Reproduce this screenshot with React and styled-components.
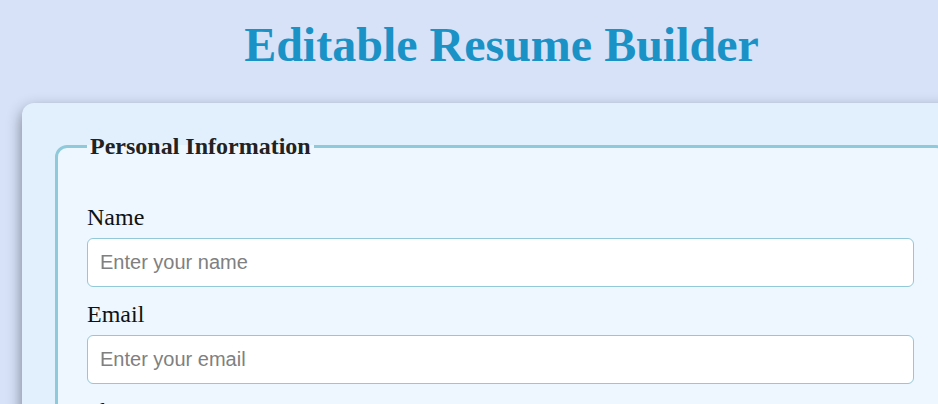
import React from "react";
import styled, { createGlobalStyle } from "styled-components";

const GlobalStyle = createGlobalStyle`
  *, *::before, *::after { box-sizing: border-box; }
  body {
    margin: 0;
    overflow: hidden;
    background: #d7e2f9;
    font-family: "Liberation Serif", "Times New Roman", serif;
    font-size: 24px;
    line-height: 27px;
    color: #111;
  }
`;

const Viewport = styled.div`
  height: 100vh;
  overflow: hidden;
`;

const Page = styled.main`
  width: calc(100% + 65px);
  padding: 17px 22px;
`;

const Title = styled.h1`
  margin: 0 0 30px;
  font-size: 48px;
  line-height: 56px;
  font-weight: 700;
  text-align: center;
  color: #1b92c6;
`;

const Card = styled.form`
  padding: 30px 33px;
  border-radius: 12px;
  background: #e2f0fe;
  box-shadow: 0 6px 15px rgba(0, 0, 0, 0.45);
`;

const Section = styled.fieldset`
  min-width: 0;
  margin: 0;
  padding: 44px 31px 30px 29px;
  border: 3px solid #8fcadb;
  border-radius: 12px;
  background: #eef7ff;
`;

const Legend = styled.legend`
  padding: 0 3px;
  font-weight: 700;
  color: #222;
`;

const Field = styled.div`
  display: flex;
  flex-direction: column;
  gap: 7px;
  margin-bottom: 14px;
`;

const Label = styled.label`
  color: #111;
`;

const TextInput = styled.input`
  width: 100%;
  height: 49px;
  padding: 0 12px;
  border: 1px solid #92c8d7;
  border-radius: 6px;
  background: #fff;
  color: #222;
  font-family: "Liberation Sans", Arial, sans-serif;
  font-size: 20px;

  &::placeholder { color: #808080; opacity: 1; }
`;

const fields = [
  { id: "name", label: "Name", type: "text", placeholder: "Enter your name" },
  { id: "email", label: "Email", type: "email", placeholder: "Enter your email" },
  { id: "phone", label: "Phone", type: "tel", placeholder: "Enter your phone number" },
];

export default function App() {
  return (
    <Viewport>
      <GlobalStyle />
      <Page>
        <Title>Editable Resume Builder</Title>
        <Card>
          <Section>
            <Legend>Personal Information</Legend>
            {fields.map(({ id, label, type, placeholder }) => (
              <Field key={id}>
                <Label htmlFor={id}>{label}</Label>
                <TextInput id={id} name={id} type={type} placeholder={placeholder} />
              </Field>
            ))}
          </Section>
        </Card>
      </Page>
    </Viewport>
  );
}
